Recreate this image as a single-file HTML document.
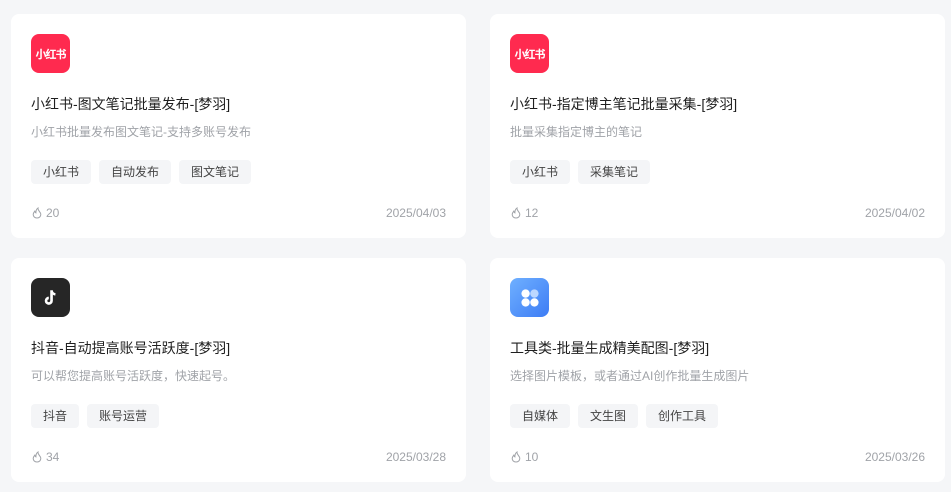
<!DOCTYPE html><html><head><meta charset="utf-8"><style>
body{margin:0;background:#f5f6f8;font-family:"Liberation Sans","Noto Sans CJK SC",sans-serif;width:951px;height:492px;overflow:hidden;position:relative}
.c{position:absolute;width:455px;height:224px;background:#fff;border-radius:8px}
.ic{position:absolute;left:20px;top:20px;width:39px;height:39px;border-radius:8px;display:flex;align-items:center;justify-content:center}
.t{position:absolute;left:20px;top:80px;font-size:14px;color:#1f1f1f;white-space:nowrap}
.d{position:absolute;left:20px;top:109px;font-size:12px;color:#a0a3a8;white-space:nowrap}
.tg{position:absolute;left:20px;top:146px;display:flex;gap:8px}
.tg span{background:#f4f5f7;border-radius:4px;height:24px;line-height:24px;padding:0 12px;font-size:12px;color:#444}
.f{position:absolute;left:20px;top:192px;font-size:12px;color:#a0a3a8;display:flex;align-items:center;gap:3px}
.dt{position:absolute;right:20px;top:192px;font-size:12px;color:#a0a3a8}
.xhs{background:#ff2a4f;color:#fff;font-size:11px;font-weight:bold;letter-spacing:-1px}
</style></head><body>
<svg width="0" height="0" style="position:absolute"><defs><symbol id="fire" viewBox="0 0 12 12"><path d="M6 11c-2.3 0-3.8-1.5-3.8-3.5 0-1.6 1-2.5 1.6-3.3.2 1 .6 1.5 1.1 1.7C4.8 3.8 5.6 2 7 1c-.2 1.6.5 2.5 1.4 3.5.8.9 1.4 1.8 1.4 3C9.8 9.5 8.3 11 6 11z" fill="none" stroke="#a0a3a8" stroke-width="1"/></symbol></defs></svg>

<div class="c" style="left:11px;top:14px">
<div class="ic xhs">小红书</div>
<div class="t">小红书-图文笔记批量发布-[梦羽]</div>
<div class="d">小红书批量发布图文笔记-支持多账号发布</div>
<div class="tg"><span>小红书</span><span>自动发布</span><span>图文笔记</span></div>
<div class="f"><svg width="12" height="12"><use href="#fire"/></svg> 20</div>
<div class="dt">2025/04/03</div></div>

<div class="c" style="left:490px;top:14px">
<div class="ic xhs">小红书</div>
<div class="t">小红书-指定博主笔记批量采集-[梦羽]</div>
<div class="d">批量采集指定博主的笔记</div>
<div class="tg"><span>小红书</span><span>采集笔记</span></div>
<div class="f"><svg width="12" height="12"><use href="#fire"/></svg> 12</div>
<div class="dt">2025/04/02</div></div>

<div class="c" style="left:11px;top:258px">
<div class="ic" style="background:#262626"><svg width="22" height="22" viewBox="0 0 20 20"><path d="M10.5 3v9.5a2.5 2.5 0 1 1-2.5-2.5" fill="none" stroke="#fff" stroke-width="2.4"/><path d="M10.5 3.5c.5 2 1.8 3 3.5 3.2" fill="none" stroke="#fff" stroke-width="2.2"/></svg></div>
<div class="t">抖音-自动提高账号活跃度-[梦羽]</div>
<div class="d">可以帮您提高账号活跃度，快速起号。</div>
<div class="tg"><span>抖音</span><span>账号运营</span></div>
<div class="f"><svg width="12" height="12"><use href="#fire"/></svg> 34</div>
<div class="dt">2025/03/28</div></div>

<div class="c" style="left:490px;top:258px">
<div class="ic" style="background:linear-gradient(135deg,#6fb0ff,#3d7cf5)"><svg width="22" height="22" viewBox="0 0 20 20"><circle cx="6" cy="6" r="3.8" fill="#fff"/><circle cx="14" cy="6" r="3.8" fill="#bcd7ff"/><circle cx="6" cy="14" r="3.8" fill="#fff"/><circle cx="14" cy="14" r="3.8" fill="#fff"/></svg></div>
<div class="t">工具类-批量生成精美配图-[梦羽]</div>
<div class="d">选择图片模板，或者通过AI创作批量生成图片</div>
<div class="tg"><span>自媒体</span><span>文生图</span><span>创作工具</span></div>
<div class="f"><svg width="12" height="12"><use href="#fire"/></svg> 10</div>
<div class="dt">2025/03/26</div></div>
</body></html>
